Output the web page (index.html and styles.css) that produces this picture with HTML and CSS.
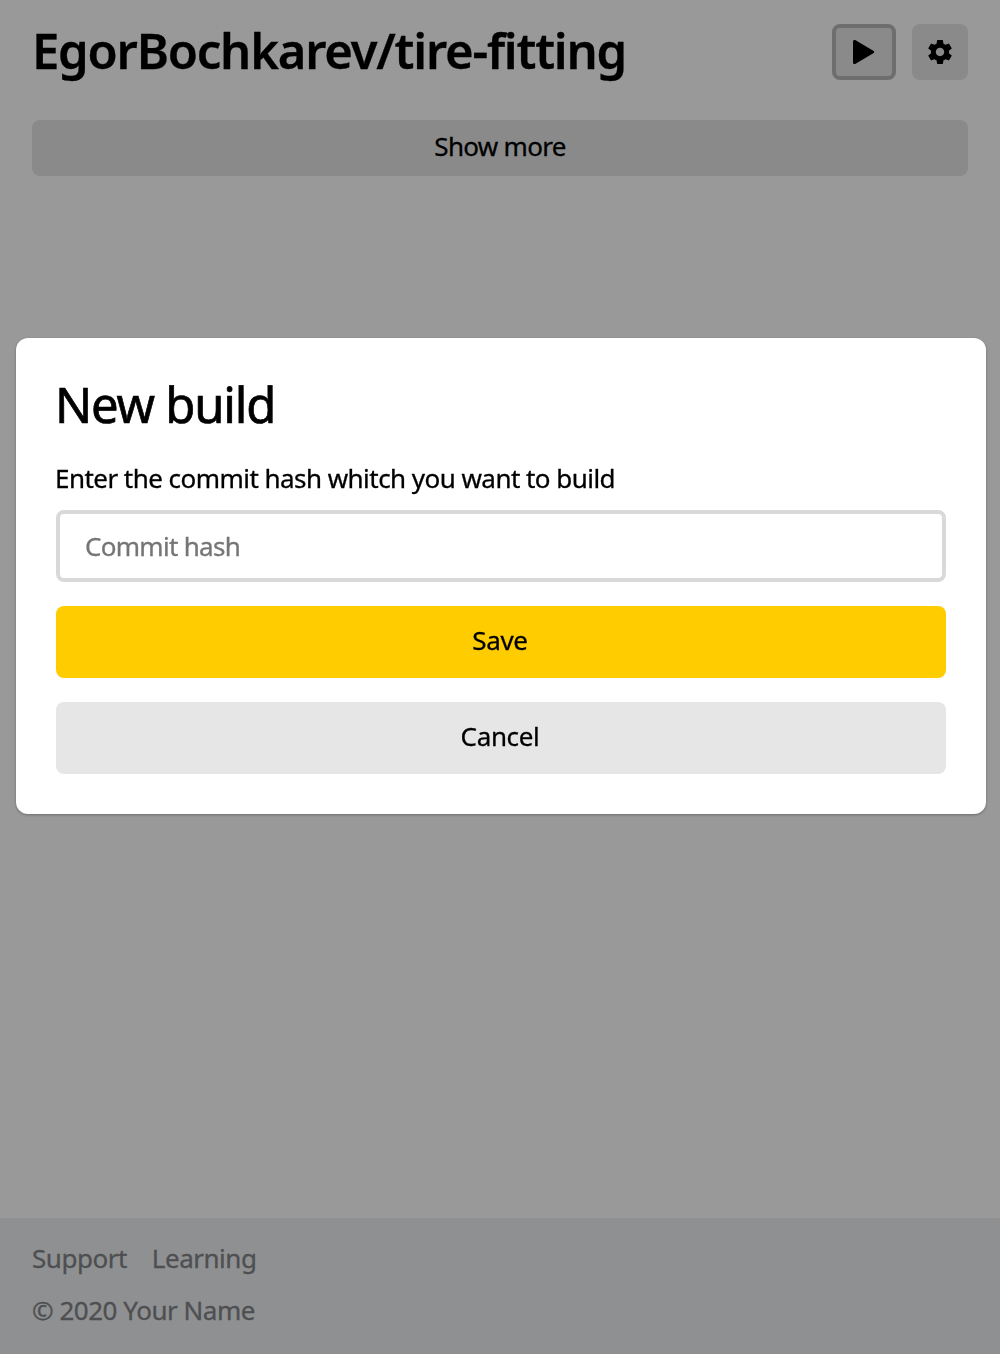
FILE: index.html
```html
<!DOCTYPE html>
<html lang="en">
<head>
  <meta charset="utf-8">
  <title>EgorBochkarev/tire-fitting</title>
  <link rel="stylesheet" href="styles.css">
</head>
<body>
  <div class="page">
    <header class="header">
      <h1 class="header__title">EgorBochkarev/tire-fitting</h1>
      <div class="header__actions">
        <button class="button button_run" type="button" aria-label="Run build">
          <svg width="22" height="24" viewBox="0 0 22 24" aria-hidden="true"><path d="M0 1.6C0 .2 1.4-.4 2.6.3L20.300 10.700C21.500 11.400 21.500 12.600 20.300 13.300L2.600 23.700C1.400 24.400 0 23.800 0 22.400Z"/></svg>
        </button>
        <button class="button button_settings" type="button" aria-label="Settings">
          <svg width="24" height="24" viewBox="2 2 20 20" aria-hidden="true"><path d="M19.430 12.980c.04-.32.07-.64.07-.98s-.03-.66-.07-.98l2.110-1.650c.19-.15.24-.42.12-.64l-2-3.460c-.12-.22-.39-.3-.61-.22l-2.490 1c-.52-.4-1.080-.73-1.690-.98l-.38-2.650C14.460 2.180 14.250 2 14 2h-4c-.25 0-.46.18-.49.42l-.38 2.650c-.61.25-1.170.59-1.690.98l-2.490-1c-.23-.09-.49 0-.61.22l-2 3.460c-.13.22-.07.49.12.64l2.110 1.650c-.04.32-.07.65-.07.98s.03.66.07.98l-2.110 1.650c-.19.15-.24.42-.12.64l2 3.460c.12.22.39.3.61.22l2.490-1c.52.4 1.080.73 1.690.98l.38 2.650c.03.24.24.42.49.42h4c.25 0 .46-.18.49-.42l.38-2.650c.61-.25 1.170-.59 1.690-.98l2.490 1c.23.09.49 0 .61-.22l2-3.460c.12-.22.07-.49-.12-.64zM12 15.500c-1.930 0-3.500-1.570-3.500-3.500s1.570-3.500 3.500-3.500 3.500 1.570 3.500 3.500-1.570 3.500-3.500 3.500z"/></svg>
        </button>
      </div>
    </header>
    <main class="content">
      <button class="button button_more" type="button">Show more</button>
    </main>
    <footer class="footer">
      <nav class="footer__nav">
        <a class="footer__link">Support</a>
        <a class="footer__link">Learning</a>
      </nav>
      <div class="footer__copy">© 2020 Your Name</div>
    </footer>
  </div>

  <div class="overlay">
    <form class="modal">
      <h2 class="modal__title">New build</h2>
      <label class="modal__label" for="hash">Enter the commit hash whitch you want to build</label>
      <input class="modal__input" id="hash" type="text" placeholder="Commit hash">
      <button class="button modal__button modal__button_save" type="button">Save</button>
      <button class="button modal__button" type="button">Cancel</button>
    </form>
  </div>
</body>
</html>
```
FILE: styles.css
```css
* {
  box-sizing: border-box;
}

body {
  margin: 0;
  font-family: "Noto Sans", "Open Sans", sans-serif;
  font-size: 26px;
  line-height: 36px;
  letter-spacing: -0.7px;
  color: #000;
  background: #fff;
  -webkit-text-stroke-width: 0.3px;
}

.page {
  display: flex;
  flex-direction: column;
  min-height: 1354px;
}

.header {
  display: flex;
  align-items: flex-start;
  justify-content: space-between;
  height: 120px;
  padding: 24px 32px 0;
}

.header__title {
  margin: 0;
  font-size: 49px;
  line-height: 52px;
  font-weight: 600;
  letter-spacing: -1.22px;
  white-space: nowrap;
}

.header__actions {
  display: flex;
  gap: 16px;
}

.button {
  display: flex;
  align-items: center;
  justify-content: center;
  height: 56px;
  padding: 0;
  border: 0;
  border-radius: 8px;
  background: #e6e6e6;
  color: #000;
  font: inherit;
  letter-spacing: inherit;
}

.button_run {
  width: 64px;
  border: 4px solid #b7b7b7;
}

.button_settings {
  width: 56px;
  padding-right: 1px;
}

.button_more {
  width: 100%;
  padding-bottom: 4px;
}

.content {
  flex: 1;
  padding: 0 32px;
}

.footer {
  height: 136px;
  padding: 22px 32px;
  background: #eff1f4;
  color: #828487;
  letter-spacing: -0.48px;
}

.footer__nav {
  display: flex;
  gap: 25px;
  margin-bottom: 16px;
}

.overlay {
  position: fixed;
  inset: 0;
  padding: 338px 14px 0 16px;
  background: rgba(0, 0, 0, 0.4);
}

.modal {
  display: flex;
  flex-direction: column;
  height: 476px;
  padding: 38px 40px 40px;
  border-radius: 12px;
  background: #fff;
  box-shadow: 0 1px 3px rgba(0, 0, 0, 0.3);
}

.modal__title {
  margin: 0 0 28px -1px;
  font-size: 49px;
  line-height: 56px;
  font-weight: 400;
  letter-spacing: -1.2px;
  -webkit-text-stroke-width: 0.7px;
}

.modal__label {
  margin: 0 0 14px -1px;
  letter-spacing: -0.54px;
}

.modal__input {
  height: 72px;
  margin-bottom: 24px;
  padding: 0 25px;
  border: 4px solid #d9d9d9;
  border-radius: 8px;
  font: inherit;
  letter-spacing: inherit;
}

.modal__input::placeholder {
  color: #757575;
}

.modal__button {
  height: 72px;
  padding: 0 2px 4px 0;
  letter-spacing: -0.35px;
}

.modal__button_save {
  margin-bottom: 24px;
  background: #fc0;
}
```
